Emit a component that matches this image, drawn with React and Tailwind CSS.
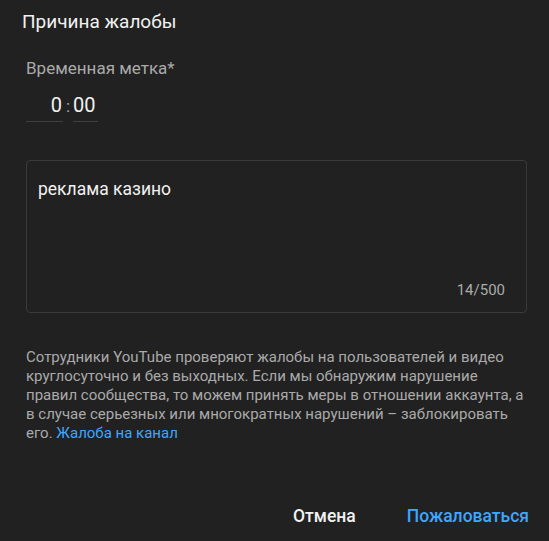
export default function App() {
  return (
    <div className="h-[541px] w-full bg-[#212121] font-['Roboto',sans-serif] flex flex-col">
      {/* Title */}
      <h2 className="pl-[22px] pt-[10px] text-[19px] leading-[24px] font-normal text-[#f1f1f1]">
        Причина жалобы
      </h2>

      <div className="px-[26px]">
        {/* Timestamp */}
        <p className="mt-[22px] text-[17px] leading-[24px] text-[#aaaaaa]">Временная метка*</p>
        <div className="mt-[13px] flex items-start">
          <div className="w-[37px] pb-[4px] border-b border-[#3f3f3f] text-right text-[20px] leading-[24px] text-[#f1f1f1] pr-[1px]">
            0
          </div>
          <span className="w-[10px] text-center text-[17px] leading-[24px] text-[#aaaaaa] pt-[1px]">:</span>
          <div className="w-[25px] pb-[4px] border-b border-[#3f3f3f] text-left text-[20px] leading-[24px] text-[#f1f1f1]">
            00
          </div>
        </div>

        {/* Textarea */}
        <div className="mt-[38px] w-[501px] h-[153px] border border-[#3a3a3a] rounded-[4px] flex flex-col justify-between pl-[11px] pr-[21px] pt-[16px] pb-[12px]">
          <p className="text-[17.5px] leading-[24px] text-[#f1f1f1]">реклама казино</p>
          <p className="text-right text-[15px] leading-[20px] text-[#aaaaaa]">14/500</p>
        </div>

        {/* Info */}
        <p className="mt-[35px] w-[501px] text-[15px] leading-[19px] text-[#aaaaaa]">
          Сотрудники YouTube проверяют жалобы на пользователей и видео круглосуточно и без выходных. Если мы обнаружим нарушение правил сообщества, то можем принять меры в отношении аккаунта, а в случае серьезных или многократных нарушений – заблокировать его.{' '}
          <span className="text-[#3ea6ff]">Жалоба на канал</span>
        </p>
      </div>

      {/* Actions */}
      <div className="mt-auto flex justify-end gap-[51px] pr-[20px] pb-[13px] text-[17.5px] leading-[24px] font-medium">
        <button className="text-[#f1f1f1]">Отмена</button>
        <button className="text-[#3ea6ff]">Пожаловаться</button>
      </div>
    </div>
  )
}
